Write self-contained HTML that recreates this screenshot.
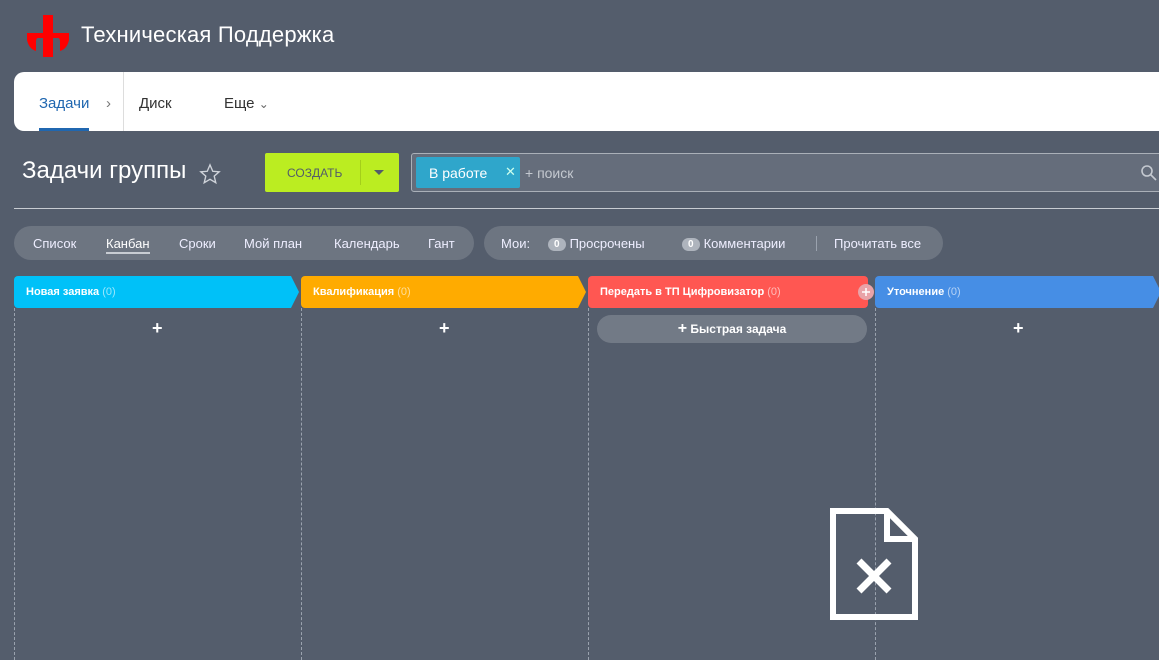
<!DOCTYPE html>
<html><head><meta charset="utf-8"><style>
*{margin:0;padding:0;box-sizing:border-box}
body{width:1159px;height:660px;overflow:hidden;background:#545d6c;font-family:"Liberation Sans",sans-serif;position:relative;color:#fff}
.abs{position:absolute}
.nav{left:14px;top:72px;width:1160px;height:59px;background:#fff;border-radius:10px 0 0 10px}
.nav span{position:absolute;top:23px;font-size:15px;color:#333}
.col{position:absolute;top:308px;height:352px;border-left:1px dashed #9aa2ae}
.hdr{position:absolute;top:276px;height:32px;font-size:11px;font-weight:bold;line-height:33px;padding-left:12px;color:#fff}
.hdr i{font-style:normal;font-weight:normal;opacity:.6}
.plus{position:absolute;top:318px;font-size:18px;font-weight:bold}
.pill{position:absolute;background:rgba(255,255,255,.15);border-radius:18px;height:34px;top:226px}
.pill span{position:absolute;top:10px;font-size:13px;color:#eef}
.cnt{display:inline-block;background:#aeb4bd;color:#fff;border-radius:9px;font-size:10px;font-weight:bold;padding:1px 6px;margin-right:4px;vertical-align:1px}
</style></head><body>
<svg class="abs" style="left:0;top:0" width="80" height="60">
<rect x="43" y="15" width="10" height="42" fill="#f00"/>
<path d="M27 33H43V38H38Q36 38 36 42V51Q29 49 27 40Z" fill="#f00"/>
<path d="M69 33H53V38H58Q60 38 60 42V51Q67 49 69 40Z" fill="#f00"/>
</svg>
<div class="abs" style="left:81px;top:22px;font-size:22px;color:#fff;letter-spacing:.2px">Техническая Поддержка</div>
<div class="abs nav">
<span style="left:25px;color:#2067b0">Задачи</span>
<div class="abs" style="left:25px;top:56px;width:50px;height:3px;background:#2067b0"></div>
<span style="left:92px;color:#777">›</span>
<div class="abs" style="left:109px;top:0;width:1px;height:59px;background:#ddd"></div>
<span style="left:125px">Диск</span>
<span style="left:210px">Еще <span style="position:static;color:#666;font-size:12px">⌄</span></span>
</div>
<div class="abs" style="left:22px;top:157px;font-size:24px;color:#fff">Задачи группы</div>
<svg class="abs" style="left:199px;top:163px" width="22" height="22" viewBox="0 0 24 24"><path d="M12 2l3 7 7 .6-5.4 4.7 1.7 7.2L12 17.8 5.7 21.5l1.7-7.2L2 9.6 9 9z" fill="none" stroke="#cfd3da" stroke-width="1.5"/></svg>
<div class="abs" style="left:265px;top:153px;width:134px;height:39px;background:#bbed21;border-radius:2px">
<div class="abs" style="left:22px;top:13px;font-size:12px;color:#535c69">СОЗДАТЬ</div>
<div class="abs" style="left:95px;top:7px;width:1px;height:25px;background:#a4cf1a"></div>
<svg class="abs" style="left:109px;top:17px" width="10" height="6"><path d="M0 0h10L5 5z" fill="#535c69"/></svg>
</div>
<div class="abs" style="left:411px;top:153px;width:760px;height:39px;border:1px solid #aab0b8;border-radius:3px;background:rgba(255,255,255,.1)"></div>
<div class="abs" style="left:416px;top:157px;width:104px;height:31px;background:#2fa6cb;border-radius:2px">
<div class="abs" style="left:13px;top:8px;font-size:14px">В работе</div>
<div class="abs" style="left:89px;top:7px;font-size:13px;color:#cfe">✕</div>
</div>
<div class="abs" style="left:525px;top:165px;font-size:14px;color:#c4c9d0">+ поиск</div>
<svg class="abs" style="left:1141px;top:165px" width="16" height="16"><circle cx="6" cy="6" r="5" fill="none" stroke="#c4c9d0" stroke-width="1.6"/><path d="M10 10l5 5" stroke="#c4c9d0" stroke-width="1.6"/></svg>
<div class="abs" style="left:14px;top:208px;width:1145px;height:1px;background:#c8ccd2"></div>
<div class="pill" style="left:14px;width:460px">
<span style="left:19px">Список</span>
<span style="left:92px;color:#fff;border-bottom:2px solid #c8ccd2;padding-bottom:1px">Канбан</span>
<span style="left:165px">Сроки</span>
<span style="left:230px">Мой план</span>
<span style="left:320px">Календарь</span>
<span style="left:414px">Гант</span>
</div>
<div class="pill" style="left:484px;width:459px">
<span style="left:17px">Мои:</span>
<span style="left:64px"><b class="cnt">0</b>Просрочены</span>
<span style="left:198px"><b class="cnt">0</b>Комментарии</span>
<div class="abs" style="left:332px;top:10px;width:1px;height:15px;background:#9aa2ae"></div>
<span style="left:350px">Прочитать все</span>
</div>
<svg class="abs" style="left:0;top:276px" width="1159" height="32">
<path d="M14 4a4 4 0 0 1 4-4H291L299 16L291 32H18a4 4 0 0 1-4-4z" fill="#00c1f8"/>
<path d="M301 4a4 4 0 0 1 4-4H578L586 16L578 32H305a4 4 0 0 1-4-4z" fill="#ffab00"/>
<path d="M588 4a4 4 0 0 1 4-4H864a4 4 0 0 1 4 4V28a4 4 0 0 1-4 4H592a4 4 0 0 1-4-4z" fill="#ff5752"/>
<path d="M875 4a4 4 0 0 1 4-4H1153L1161 16L1153 32H879a4 4 0 0 1-4-4z" fill="#468ee5"/>
<circle cx="866" cy="16" r="8" fill="#e9a3a8"/><path d="M862 16h8M866 12v8" stroke="#fff" stroke-width="1.5"/>
</svg>
<div class="hdr" style="left:14px">Новая заявка <i>(0)</i></div>
<div class="hdr" style="left:301px">Квалификация <i>(0)</i></div>
<div class="hdr" style="left:588px">Передать в ТП Цифровизатор <i>(0)</i></div>
<div class="hdr" style="left:875px">Уточнение <i>(0)</i></div>
<div class="col" style="left:14px"></div>
<div class="col" style="left:301px"></div>
<div class="col" style="left:588px"></div>
<div class="col" style="left:875px"></div>
<div class="plus" style="left:152px">+</div>
<div class="plus" style="left:439px">+</div>
<div class="plus" style="left:1013px">+</div>
<div class="abs" style="left:597px;top:315px;width:270px;height:28px;background:rgba(255,255,255,.18);border-radius:14px;text-align:center;line-height:28px;font-size:12px;font-weight:bold"><span style="font-size:16px">+</span> Быстрая задача</div>
<svg class="abs" style="left:828px;top:506px" width="92" height="116" viewBox="0 0 92 116">
<path d="M5 5H59L87 33V111H5Z" fill="none" stroke="#fff" stroke-width="6" stroke-linejoin="miter"/>
<path d="M59 5V33H87" fill="none" stroke="#fff" stroke-width="6"/>
<path d="M31 55L61 85M61 55L31 85" stroke="#fff" stroke-width="7"/>
</svg>
</body></html>
